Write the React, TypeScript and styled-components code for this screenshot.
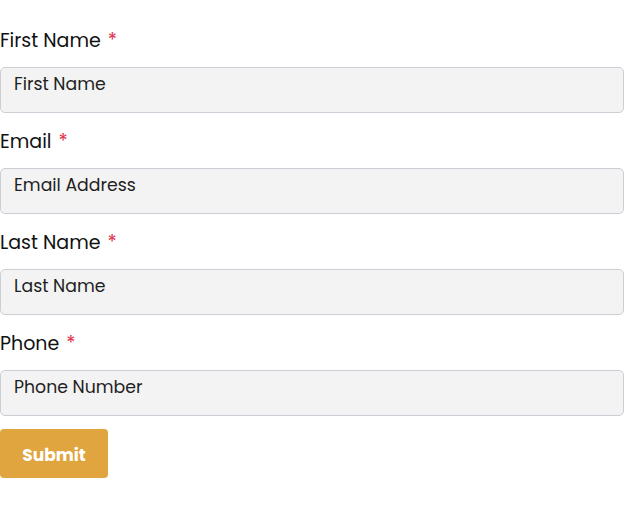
import React from "react";
import styled, { createGlobalStyle } from "styled-components";

const GlobalStyle = createGlobalStyle`
  body {
    margin: 0;
    background: #ffffff;
    font-family: "Poppins", "Open Sans", "Liberation Sans", sans-serif;
    color: #1b1b1b;
  }
`;

interface Field {
  label: string;
  placeholder: string;
  type: string;
}

const fields: Field[] = [
  { label: "First Name", placeholder: "First Name", type: "text" },
  { label: "Email", placeholder: "Email Address", type: "email" },
  { label: "Last Name", placeholder: "Last Name", type: "text" },
  { label: "Phone", placeholder: "Phone Number", type: "tel" },
];

const App: React.FC = () => {
  return (
    <>
      <GlobalStyle />
      <Form onSubmit={(e) => e.preventDefault()}>
        {fields.map((f) => (
          <Group key={f.label}>
            <Label>
              {f.label}
              <Required>*</Required>
            </Label>
            <Input type={f.type} placeholder={f.placeholder} />
          </Group>
        ))}
        <SubmitButton type="submit">Submit</SubmitButton>
      </Form>
    </>
  );
};

const Form = styled.form`
  width: 624px;
  padding-top: 27px;
  display: flex;
  flex-direction: column;
  gap: 15px;
`;

const Group = styled.div`
  display: flex;
  flex-direction: column;
  gap: 13px;
`;

const Label = styled.label`
  font-size: 19px;
  line-height: 27px;
  height: 27px;
  color: #111;
`;

const Required = styled.span`
  color: #e0334c;
  margin-left: 7px;
`;

const Input = styled.input`
  box-sizing: border-box;
  width: 100%;
  height: 46px;
  margin: 0;
  padding: 4px 13px 16px;
  border: 1px solid #cdcdd5;
  border-radius: 5px;
  background: #f3f3f3;
  font-family: inherit;
  font-size: 17.3px;
  line-height: 24px;
  color: #1b1b1b;
  outline: none;

  &::placeholder {
    color: #1f1f1f;
    opacity: 1;
  }
`;

const SubmitButton = styled.button`
  align-self: flex-start;
  margin-top: -2px;
  width: 108px;
  height: 49px;
  padding: 3px 0 0;
  border: none;
  border-radius: 4px;
  background: #e0a53f;
  color: #ffffff;
  font-family: inherit;
  font-size: 17px;
  font-weight: 700;
  cursor: pointer;
`;

export default App;
